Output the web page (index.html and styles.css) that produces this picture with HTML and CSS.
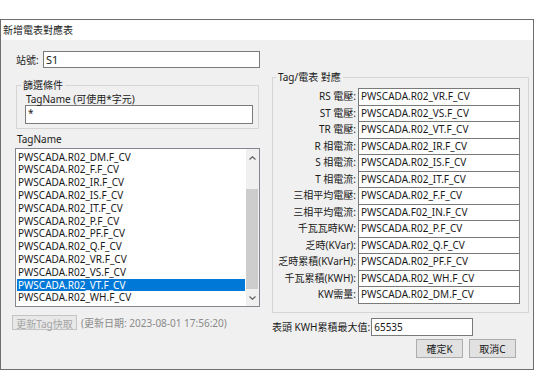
FILE: index.html
```html
<!DOCTYPE html>
<html lang="zh-Hant">
  <head>
    <meta charset="UTF-8" />
    <title>新增電表對應表</title>
    <link rel="stylesheet" href="styles.css">
  </head>
  <body>
    <div class="dialog">
      <div class="titlebar">新增電表對應表</div>

      <div class="content">
        <!-- 左側: 站號 / 篩選 / Tag 清單 -->
        <div class="left">
          <div class="station">
            <label>站號:</label>
            <div class="textbox station-input">S1</div>
          </div>

          <fieldset class="group filter">
            <legend>篩選條件</legend>
            <div class="caption">TagName (可使用*字元)</div>
            <div class="textbox filter-input">*</div>
          </fieldset>

          <div class="caption list-caption">TagName</div>
          <div class="listbox">
            <ul class="items">
              <li>PWSCADA.R02_DM.F_CV</li>
              <li>PWSCADA.R02_F.F_CV</li>
              <li>PWSCADA.R02_IR.F_CV</li>
              <li>PWSCADA.R02_IS.F_CV</li>
              <li>PWSCADA.R02_IT.F_CV</li>
              <li>PWSCADA.R02_P.F_CV</li>
              <li>PWSCADA.R02_PF.F_CV</li>
              <li>PWSCADA.R02_Q.F_CV</li>
              <li>PWSCADA.R02_VR.F_CV</li>
              <li>PWSCADA.R02_VS.F_CV</li>
              <li class="selected">PWSCADA.R02_VT.F_CV</li>
              <li>PWSCADA.R02_WH.F_CV</li>
            </ul>
            <div class="scrollbar">
              <div class="arrow">
                <svg width="7" height="4" viewBox="0 0 7 4"><path d="M0.5 3.5 L3.5 0.8 L6.5 3.5" fill="none" stroke="#606060" stroke-width="1.2"/></svg>
              </div>
              <div class="track"><div class="thumb"></div></div>
              <div class="arrow">
                <svg width="7" height="4" viewBox="0 0 7 4"><path d="M0.5 0.5 L3.5 3.2 L6.5 0.5" fill="none" stroke="#606060" stroke-width="1.2"/></svg>
              </div>
            </div>
          </div>

          <div class="refresh">
            <button class="btn" disabled>更新Tag快取</button>
            <span class="date">(更新日期: 2023-08-01 17:56:20)</span>
          </div>
        </div>

        <!-- 右側: Tag 與電表欄位對應 -->
        <div class="right">
          <fieldset class="group mapping">
            <legend>Tag/電表 對應</legend>
            <div class="map-grid">
              <label>RS 電壓:</label><div class="textbox">PWSCADA.R02_VR.F_CV</div>
              <label>ST 電壓:</label><div class="textbox">PWSCADA.R02_VS.F_CV</div>
              <label>TR 電壓:</label><div class="textbox">PWSCADA.R02_VT.F_CV</div>
              <label>R 相電流:</label><div class="textbox">PWSCADA.R02_IR.F_CV</div>
              <label>S 相電流:</label><div class="textbox">PWSCADA.R02_IS.F_CV</div>
              <label>T 相電流:</label><div class="textbox">PWSCADA.R02_IT.F_CV</div>
              <label>三相平均電壓:</label><div class="textbox">PWSCADA.R02_F.F_CV</div>
              <label>三相平均電流:</label><div class="textbox">PWSCADA.F02_IN.F_CV</div>
              <label>千瓦瓦時KW:</label><div class="textbox">PWSCADA.R02_P.F_CV</div>
              <label>乏時(KVar):</label><div class="textbox">PWSCADA.R02_Q.F_CV</div>
              <label>乏時累積(KVarH):</label><div class="textbox">PWSCADA.R02_PF.F_CV</div>
              <label>千瓦累積(KWH):</label><div class="textbox">PWSCADA.R02_WH.F_CV</div>
              <label>KW需量:</label><div class="textbox">PWSCADA.R02_DM.F_CV</div>
            </div>
          </fieldset>

          <div class="maxval">
            <label>表頭 KWH累積最大值:</label>
            <div class="textbox max-input">65535</div>
          </div>

          <div class="actions">
            <button class="btn">確定K</button>
            <button class="btn">取消C</button>
          </div>
        </div>
      </div>
    </div>
  </body>
</html>
```

FILE: styles.css
```css
body {
  margin: 0;
  background: #fff;
  font-family: "Noto Sans", "Noto Sans CJK TC", sans-serif;
  font-size: 10px;
  color: #1a1a1a;
}

.dialog {
  box-sizing: border-box;
  width: 534px;
  height: 351px;
  margin-top: 19px;
  border: 1px solid #6e6e6e;
  display: flex;
  flex-direction: column;
  background: #f0f0f0;
}

.titlebar {
  height: 20px;
  line-height: 20px;
  padding-left: 2px;
  background: #fff;
}

.content {
  flex: 1;
  display: flex;
  gap: 12px;
  padding: 11px 0 0 14px;
}

/* 共用元件 */
.textbox {
  box-sizing: border-box;
  background: #fff;
  border: 1px solid #7a7a7a;
  padding-left: 2px;
  white-space: nowrap;
  overflow: hidden;
}

.btn {
  box-sizing: border-box;
  height: 19px;
  width: 47px;
  padding: 0;
  font: inherit;
  color: #1a1a1a;
  background: #e1e1e1;
  border: 1px solid #adadad;
}

.group {
  margin: 0;
  padding: 0;
  border: 1px solid #d5d5d5;
}

.group legend {
  padding: 0 2px;
  line-height: 12px;
}

.caption {
  line-height: 12px;
}

/* 左側 */
.left {
  width: 245px;
  display: flex;
  flex-direction: column;
}

.station {
  display: flex;
  align-items: center;
  height: 17px;
}

.station label {
  width: 27px;
  padding-left: 1px;
}

.station-input {
  flex: 1;
  height: 17px;
  line-height: 15px;
  font-size: 11px;
}

.filter {
  margin: 11px 1px 0 1px;
  padding: 0 5px 4px 8px;
}

.filter legend {
  margin-left: -4px;
}

.filter .caption {
  margin-top: 2px;
  padding-left: 1px;
}

.filter-input {
  height: 19px;
  line-height: 15px;
}

.list-caption {
  margin-top: 4px;
  padding-left: 2px;
}

.listbox {
  box-sizing: border-box;
  height: 159px;
  margin-top: 3px;
  border: 1px solid #828790;
  background: #fff;
  display: flex;
}

.items {
  flex: 1;
  list-style: none;
  margin: 0;
  padding: 1.6px 1px 0 1px;
}

.items li {
  height: 12.8px;
  line-height: 12.8px;
  padding-left: 1px;
  white-space: nowrap;
}

.items li.selected {
  background: #0078d7;
  color: #fff;
}

.scrollbar {
  width: 13px;
  background: #f0f0f0;
  display: flex;
  flex-direction: column;
}

.scrollbar .arrow {
  height: 17px;
  display: flex;
  align-items: center;
  justify-content: center;
}

.track {
  flex: 1;
  display: flex;
  flex-direction: column;
  justify-content: flex-end;
}

.thumb {
  height: 100px;
  margin: 0 1px 0 0;
  background: #cdcdcd;
}

.refresh {
  display: flex;
  align-items: center;
  gap: 4px;
  margin: 8px 0 0 -3px;
}

.refresh .btn {
  width: 65px;
  height: 15px;
  color: #a6a6a6;
  background: #e8e8e8;
  border-color: #c4c4c4;
}

.date {
  color: #8a8a8a;
}

/* 右側 */
.right {
  width: 257px;
  display: flex;
  flex-direction: column;
  padding-top: 20px;
}

.mapping {
  padding: 5px 8px 9px 1px;
}

.mapping legend {
  margin-left: 2px;
}

.map-grid {
  display: grid;
  grid-template-columns: 82px 1fr;
  column-gap: 2px;
}

.map-grid label {
  text-align: right;
  height: 16.5px;
  line-height: 16.5px;
  white-space: nowrap;
}

.map-grid .textbox {
  height: 17.5px;
  line-height: 15.5px;
  margin-bottom: -1px;
}

.maxval {
  display: flex;
  align-items: center;
  margin-top: 5px;
}

.maxval label {
  padding-right: 1px;
}

.max-input {
  width: 102px;
  height: 18px;
  line-height: 16px;
}

.actions {
  display: flex;
  justify-content: flex-end;
  gap: 6px;
  margin-top: 3px;
  padding-right: 13px;
}
```
